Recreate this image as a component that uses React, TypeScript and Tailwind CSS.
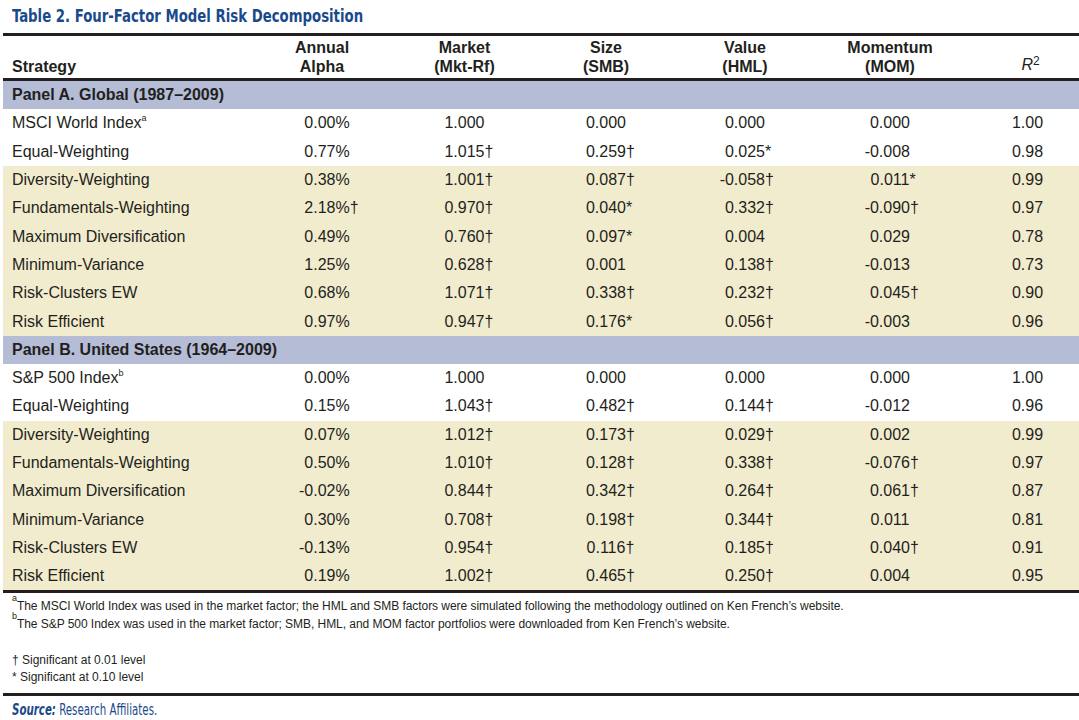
import React from "react";

type Row = { name: string; sup?: string; vals: string[]; tan: boolean };

const panelA: Row[] = [
  { name: "MSCI World Index", sup: "a", vals: ["0.00%", "1.000", "0.000", "0.000", "0.000", "1.00"], tan: false },
  { name: "Equal-Weighting", vals: ["0.77%", "1.015†", "0.259†", "0.025*", "-0.008", "0.98"], tan: false },
  { name: "Diversity-Weighting", vals: ["0.38%", "1.001†", "0.087†", "-0.058†", "0.011*", "0.99"], tan: true },
  { name: "Fundamentals-Weighting", vals: ["2.18%†", "0.970†", "0.040*", "0.332†", "-0.090†", "0.97"], tan: true },
  { name: "Maximum Diversification", vals: ["0.49%", "0.760†", "0.097*", "0.004", "0.029", "0.78"], tan: true },
  { name: "Minimum-Variance", vals: ["1.25%", "0.628†", "0.001", "0.138†", "-0.013", "0.73"], tan: true },
  { name: "Risk-Clusters EW", vals: ["0.68%", "1.071†", "0.338†", "0.232†", "0.045†", "0.90"], tan: true },
  { name: "Risk Efficient", vals: ["0.97%", "0.947†", "0.176*", "0.056†", "-0.003", "0.96"], tan: true },
];

const panelB: Row[] = [
  { name: "S&P 500 Index", sup: "b", vals: ["0.00%", "1.000", "0.000", "0.000", "0.000", "1.00"], tan: false },
  { name: "Equal-Weighting", vals: ["0.15%", "1.043†", "0.482†", "0.144†", "-0.012", "0.96"], tan: false },
  { name: "Diversity-Weighting", vals: ["0.07%", "1.012†", "0.173†", "0.029†", "0.002", "0.99"], tan: true },
  { name: "Fundamentals-Weighting", vals: ["0.50%", "1.010†", "0.128†", "0.338†", "-0.076†", "0.97"], tan: true },
  { name: "Maximum Diversification", vals: ["-0.02%", "0.844†", "0.342†", "0.264†", "0.061†", "0.87"], tan: true },
  { name: "Minimum-Variance", vals: ["0.30%", "0.708†", "0.198†", "0.344†", "0.011", "0.81"], tan: true },
  { name: "Risk-Clusters EW", vals: ["-0.13%", "0.954†", "0.116†", "0.185†", "0.040†", "0.91"], tan: true },
  { name: "Risk Efficient", vals: ["0.19%", "1.002†", "0.465†", "0.250†", "0.004", "0.95"], tan: true },
];

const grid = "grid grid-cols-[254px_140px_135px_148px_130px_160px_109px]";

function Val({ v, last }: { v: string; last?: boolean }) {
  let minus = "";
  let core = v;
  let suffix = "";
  if (core.startsWith("-")) {
    minus = "-";
    core = core.slice(1);
  }
  const end = core.slice(-1);
  if (end === "†" || end === "*") {
    suffix = end;
    core = core.slice(0, -1);
  }
  return (
    <div className={`flex items-center justify-center ${last ? "pl-[6px]" : ""}`}>
      <span className="w-[9px] text-right">{minus}</span>
      <span>{core}</span>
      <span className="w-[9px] text-left">{suffix}</span>
    </div>
  );
}

function DataRow({ r }: { r: Row }) {
  return (
    <div className={`${grid} h-[28.3px] items-center ${r.tan ? "bg-[#f2ecce]" : "bg-white"}`}>
      <div className="pl-[9px] whitespace-nowrap">
        {r.name}
        {r.sup && <sup className="text-[9px] relative top-[-1px] align-super leading-none">{r.sup}</sup>}
      </div>
      {r.vals.map((v, i) => (
        <Val key={i} v={v} last={i === 5} />
      ))}
    </div>
  );
}

function Band({ label }: { label: string }) {
  return (
    <div className="h-[28.3px] bg-[#b4bcd6] flex items-center pl-[9px] font-bold">{label}</div>
  );
}

export default function App() {
  const cond = { fontFamily: '"DejaVu Sans Condensed", "Liberation Sans", sans-serif' };
  return (
    <div className="w-[1079px] h-[720px] bg-white overflow-hidden text-[#231f20]" style={{ fontFamily: '"Liberation Sans", Arial, sans-serif' }}>
      <div className="h-[33px] pl-[12px] pt-[6px]">
        <div className="text-[18px] font-bold leading-[20px] text-[#1b4a8c] whitespace-nowrap origin-left scale-x-[0.82]" style={cond}>
          Table 2. Four-Factor Model Risk Decomposition
        </div>
      </div>
      <div className="ml-[3px] text-[16px]">
        <div className="h-[3px] bg-[#231f20]" />
        <div className={`${grid} h-[42px] items-end pb-[2px] font-bold leading-[19px]`}>
          <div className="pl-[9px]">Strategy</div>
          <div className="text-center pr-[10px]">Annual<br />Alpha</div>
          <div className="text-center">Market<br />(Mkt-Rf)</div>
          <div className="text-center">Size<br />(SMB)</div>
          <div className="text-center">Value<br />(HML)</div>
          <div className="text-center">Momentum<br />(MOM)</div>
          <div className="text-center pl-[12px] font-normal">
            <span className="italic">R</span>
            <span className="text-[12px] relative top-[-5px]">2</span>
          </div>
        </div>
        <div className="h-[3px] bg-[#231f20]" />
        <Band label="Panel A. Global (1987–2009)" />
        {panelA.map((r, i) => (
          <DataRow key={"a" + i} r={r} />
        ))}
        <Band label="Panel B. United States (1964–2009)" />
        {panelB.map((r, i) => (
          <DataRow key={"b" + i} r={r} />
        ))}
        <div className="h-[3px] bg-[#231f20]" />
        <div className="pl-[9px] pt-[4px] text-[12px] leading-[18px]">
          <div className="whitespace-nowrap tracking-[-0.05px]">
            <sup className="text-[9px] leading-none align-super">a</sup>The MSCI World Index was used in the market factor; the HML and SMB factors were simulated following the methodology outlined on Ken French’s website.
          </div>
          <div className="whitespace-nowrap tracking-[-0.05px]">
            <sup className="text-[9px] leading-none align-super">b</sup>The S&amp;P 500 Index was used in the market factor; SMB, HML, and MOM factor portfolios were downloaded from Ken French’s website.
          </div>
          <div className="h-[19px]" />
          <div className="leading-[17px]">† Significant at 0.01 level</div>
          <div className="leading-[17px]">* Significant at 0.10 level</div>
        </div>
        <div className="h-[3px] bg-[#231f20] mt-[7px]" />
        <div className="pl-[9px] pt-[5px]">
          <div className="text-[15px] leading-[18px] text-[#1b4a8c] whitespace-nowrap origin-left scale-x-[0.76]" style={cond}>
            <span className="italic font-bold">Source:</span> Research Affiliates.
          </div>
        </div>
      </div>
    </div>
  );
}
